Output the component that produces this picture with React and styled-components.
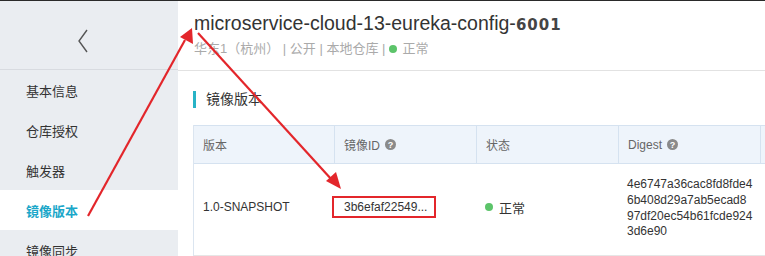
import React from "react";
import styled, { createGlobalStyle } from "styled-components";

const Global = createGlobalStyle`
  html, body { margin: 0; padding: 0; background: #fff; }
  body {
    font-family: "Liberation Sans", Arial, "Noto Sans CJK SC", sans-serif;
    color: #333;
    width: 765px;
    height: 256px;
    overflow: hidden;
  }
`;

const Page = styled.div`
  position: relative;
  width: 765px;
  height: 256px;
  overflow: hidden;
  border-top: 1px solid #2a2a2a;
  box-sizing: border-box;
  display: flex;
`;

const Sidebar = styled.aside`
  width: 178px;
  flex: none;
  background: #eaedf1;
  display: flex;
  flex-direction: column;
`;

const BackBar = styled.div`
  height: 69px;
  flex: none;
  border-bottom: 1px solid #d8dbe0;
  display: flex;
  align-items: flex-start;
  padding: 28px 0 0 77px;
  box-sizing: border-box;
`;

const NavItem = styled.div`
  height: 40px;
  flex: none;
  display: flex;
  align-items: center;
  padding-left: 26px;
  font-size: 13px;
  background: ${(p) => (p.$active ? "#fff" : "transparent")};
  color: ${(p) => (p.$active ? "#1ba7c9" : "#333")};
  font-weight: ${(p) => (p.$active ? "bold" : "normal")};
`;

const Main = styled.main`
  flex: 1;
  min-width: 0;
  display: flex;
  flex-direction: column;
`;

const Header = styled.div`
  height: 70px;
  flex: none;
  border-bottom: 1px solid #e2e2e2;
  padding: 9px 0 0 16px;
  box-sizing: border-box;
`;

const Title = styled.h1`
  margin: 0;
  font-size: 19.5px;
  font-weight: normal;
  color: #333;
  line-height: 26px;
  white-space: nowrap;
`;

const Port = styled.span`
  font-family: "DejaVu Sans", "Liberation Sans", sans-serif;
  font-size: 15px;
  font-weight: bold;
  letter-spacing: 1px;
  color: #444;
`;

const Meta = styled.div`
  font-size: 13px;
  color: #aaa;
  line-height: 22px;
  display: flex;
  align-items: center;
  white-space: nowrap;
`;

const Dot = styled.span`
  display: inline-block;
  flex: none;
  width: 8px;
  height: 8px;
  border-radius: 50%;
  background: #5cc46a;
  margin: ${(p) => (p.$tight ? "0 6px 0 0" : "0 5px 0 4px")};
`;

const Body = styled.div`
  padding: 20px 0 0 15px;
`;

const Section = styled.div`
  height: 17px;
  border-left: 3px solid #27b3c6;
  padding-left: 10px;
  font-size: 14px;
  color: #333;
  line-height: 17px;
  margin-bottom: 17px;
`;

const Table = styled.div`
  display: grid;
  grid-template-columns: 141px 142px 142px 142px 40px;
  border-left: 1px solid #dbe5f0;
`;

const HeadCell = styled.div`
  height: 37px;
  background: #eef4fb;
  border-top: 1px solid #d5e2f0;
  border-bottom: 1px solid #d5e2f0;
  border-right: 1px solid #d5e2f0;
  display: flex;
  align-items: center;
  padding-left: 9px;
  font-size: 12px;
  color: #666;
`;

const Cell = styled.div`
  height: 92px;
  box-sizing: border-box;
  padding-bottom: 5px;
  border-bottom: 1px solid #e6e6e6;
  display: flex;
  align-items: center;
  padding-left: ${(p) => p.$pad || 9}px;
  font-size: 12px;
  color: #333;
`;

const StatusText = styled.span`
  font-size: 13px;
`;

const Help = styled.span`
  display: inline-flex;
  width: 11px;
  height: 11px;
  border-radius: 50%;
  background: #8a8a8a;
  color: #fff;
  font-size: 9px;
  font-weight: bold;
  align-items: center;
  justify-content: center;
  margin-left: 5px;
`;

const Marked = styled.span`
  position: relative;
  &::after {
    content: "";
    position: absolute;
    left: -12px;
    right: -9px;
    top: -4px;
    bottom: -4px;
    border: 2px solid #e3262b;
  }
`;

const Digest = styled.div`
  line-height: 15.7px;
  font-size: 12px;
  margin-top: 3px;
  white-space: pre;
`;

const Overlay = styled.svg`
  position: absolute;
  left: 0;
  top: -1px;
  pointer-events: none;
`;

const Chevron = () => (
  <svg width="12" height="24" viewBox="0 0 12 24">
    <path d="M10 1 L2 12 L10 23" fill="none" stroke="#555" strokeWidth="1.4" />
  </svg>
);

export default function App() {
  const nav = ["基本信息", "仓库授权", "触发器", "镜像版本", "镜像同步"];
  const digest = ["4e6747a36cac8fd8fde4", "6b408d29a7ab5ecad8", "97df20ec54b61fcde924", "3d6e90"];
  return (
    <>
      <Global />
      <Page>
        <Sidebar>
          <BackBar>
            <Chevron />
          </BackBar>
          {nav.map((n) => (
            <NavItem key={n} $active={n === "镜像版本"}>
              {n}
            </NavItem>
          ))}
        </Sidebar>
        <Main>
          <Header>
            <Title>
              microservice-cloud-13-eureka-config-<Port>6001</Port>
            </Title>
            <Meta>
              华东1（杭州） | 公开 | 本地仓库 |<Dot />正常
            </Meta>
          </Header>
          <Body>
            <Section>镜像版本</Section>
            <Table>
              <HeadCell>版本</HeadCell>
              <HeadCell>
                镜像ID<Help>?</Help>
              </HeadCell>
              <HeadCell>状态</HeadCell>
              <HeadCell>
                Digest<Help>?</Help>
              </HeadCell>
              <HeadCell />
              <Cell>1.0-SNAPSHOT</Cell>
              <Cell>
                <Marked>3b6efaf22549...</Marked>
              </Cell>
              <Cell $pad={8}>
                <Dot $tight />
                <StatusText>正常</StatusText>
              </Cell>
              <Cell $pad={8}>
                <Digest>{digest.join("\n")}</Digest>
              </Cell>
              <Cell />
            </Table>
          </Body>
        </Main>
        <Overlay width="765" height="257" viewBox="0 0 765 257">
          <line x1="88" y1="216" x2="185" y2="40" stroke="#e3262b" strokeWidth="2.2" />
          <polygon points="192,28 193,44 180,37" fill="#e3262b" />
          <line x1="198" y1="33" x2="332" y2="180" stroke="#e3262b" strokeWidth="2.2" />
          <polygon points="341,189 326,181 336,172" fill="#e3262b" />
        </Overlay>
      </Page>
    </>
  );
}
